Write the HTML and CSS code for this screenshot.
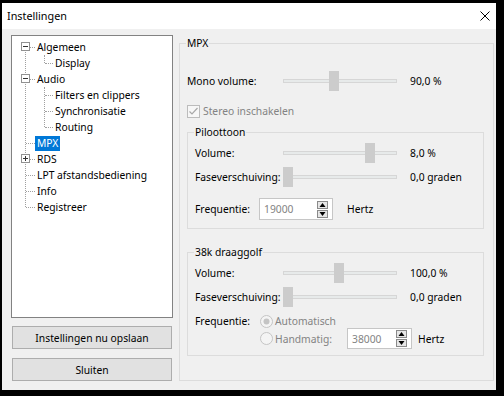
FILE: index.html
```html
<!DOCTYPE html>
<html lang="nl">
<head>
<meta charset="utf-8">
<title>Instellingen</title>
<link rel="stylesheet" href="styles.css">
</head>
<body>
<div class="window">
  <div class="titlebar">
    <span class="title">Instellingen</span>
    <svg class="close" width="10" height="10" viewBox="0 0 10 10"><path d="M0.5 0.5 L9.5 9.5 M9.5 0.5 L0.5 9.5" stroke="#000" stroke-width="1" fill="none"/></svg>
  </div>
  <div class="client">
    <div class="left">
      <div class="tree">
        <ul class="root">
          <li>
            <div class="row"><svg class="exp" width="9" height="9" viewBox="0 0 9 9"><rect x="0.5" y="0.5" width="8" height="8" fill="#fff" stroke="#919191"/><path d="M2 4.5 H7" stroke="#333" stroke-width="1"/></svg><span class="lbl">Algemeen</span></div>
            <ul class="children">
              <li><div class="row"><span class="lbl">Display</span></div></li>
            </ul>
          </li>
          <li>
            <div class="row"><svg class="exp" width="9" height="9" viewBox="0 0 9 9"><rect x="0.5" y="0.5" width="8" height="8" fill="#fff" stroke="#919191"/><path d="M2 4.5 H7" stroke="#333" stroke-width="1"/></svg><span class="lbl">Audio</span></div>
            <ul class="children">
              <li><div class="row"><span class="lbl">Filters en clippers</span></div></li>
              <li><div class="row"><span class="lbl">Synchronisatie</span></div></li>
              <li><div class="row"><span class="lbl">Routing</span></div></li>
            </ul>
          </li>
          <li><div class="row"><span class="lbl selected">MPX</span></div></li>
          <li><div class="row"><svg class="exp" width="9" height="9" viewBox="0 0 9 9"><rect x="0.5" y="0.5" width="8" height="8" fill="#fff" stroke="#919191"/><path d="M2 4.5 H7 M4.5 2 V7" stroke="#333" stroke-width="1"/></svg><span class="lbl">RDS</span></div></li>
          <li><div class="row"><span class="lbl">LPT afstandsbediening</span></div></li>
          <li><div class="row"><span class="lbl">Info</span></div></li>
          <li><div class="row"><span class="lbl">Registreer</span></div></li>
        </ul>
      </div>
      <button class="btn save">Instellingen nu opslaan</button>
      <button class="btn close-btn">Sluiten</button>
    </div>

    <div class="group mpx">
      <span class="legend">MPX</span>
      <div class="srow">
        <span class="slabel wide">Mono volume:</span>
        <div class="slider"><div class="track"></div><div class="thumb" style="left:46px"></div></div>
        <span class="value">90,0 %</span>
      </div>
      <div class="check">
        <svg class="cbox" width="13" height="13" viewBox="0 0 13 13"><rect x="0.5" y="0.5" width="12" height="12" fill="#f7f7f7" stroke="#bcbcbc"/><path d="M2.5 6.5 L5 9 L10.5 3" stroke="#a8a8a8" stroke-width="1.2" fill="none"/></svg>
        <span class="disabled">Stereo inschakelen</span>
      </div>

      <div class="group sub pilot">
        <span class="legend">Piloottoon</span>
        <div class="srow">
          <span class="slabel">Volume:</span>
          <div class="slider"><div class="track"></div><div class="thumb" style="left:82px"></div></div>
          <span class="value">8,0 %</span>
        </div>
        <div class="srow gap">
          <span class="slabel">Faseverschuiving:</span>
          <div class="slider"><div class="track"></div><div class="thumb" style="left:0px"></div></div>
          <span class="value">0,0 graden</span>
        </div>
        <div class="frow">
          <span class="flabel">Frequentie:</span>
          <div class="spin wide-spin">
            <span class="spin-text">19000</span>
            <svg class="arrows" width="11" height="17" viewBox="0 0 11 17"><rect x="0.5" y="0.5" width="10" height="7" fill="#e6e6e6" stroke="#8a8a8a"/><rect x="0.5" y="9.5" width="10" height="7" fill="#e6e6e6" stroke="#8a8a8a"/><path d="M5.5 2 L8.5 6 H2.5 Z" fill="#000"/><path d="M2.5 11 H8.5 L5.5 15 Z" fill="#000"/></svg>
          </div>
          <span class="unit">Hertz</span>
        </div>
      </div>

      <div class="group sub carrier">
        <span class="legend">38k draaggolf</span>
        <div class="srow">
          <span class="slabel">Volume:</span>
          <div class="slider"><div class="track"></div><div class="thumb" style="left:51px"></div></div>
          <span class="value">100,0 %</span>
        </div>
        <div class="srow gap">
          <span class="slabel">Faseverschuiving:</span>
          <div class="slider"><div class="track"></div><div class="thumb" style="left:0px"></div></div>
          <span class="value">0,0 graden</span>
        </div>
        <div class="fblock">
          <span class="flabel2">Frequentie:</span>
          <div class="radios">
            <div class="rrow first">
              <svg class="radio" width="13" height="13" viewBox="0 0 13 13"><circle cx="6.5" cy="6.5" r="6" fill="#f4f4f4" stroke="#c4c4c4"/><circle cx="6.5" cy="6.5" r="3" fill="#c4c4c4"/></svg>
              <span class="disabled">Automatisch</span>
            </div>
            <div class="rrow second">
              <svg class="radio" width="13" height="13" viewBox="0 0 13 13"><circle cx="6.5" cy="6.5" r="6" fill="#f4f4f4" stroke="#c4c4c4"/></svg>
              <span class="disabled rtext">Handmatig:</span>
              <div class="spin small-spin">
                <span class="spin-text">38000</span>
                <svg class="arrows" width="11" height="17" viewBox="0 0 11 17"><rect x="0.5" y="0.5" width="10" height="7" fill="#e6e6e6" stroke="#8a8a8a"/><rect x="0.5" y="9.5" width="10" height="7" fill="#e6e6e6" stroke="#8a8a8a"/><path d="M5.5 2 L8.5 6 H2.5 Z" fill="#000"/><path d="M2.5 11 H8.5 L5.5 15 Z" fill="#000"/></svg>
              </div>
              <span class="unit2">Hertz</span>
            </div>
          </div>
        </div>
      </div>
    </div>
  </div>
</div>
</body>
</html>
```

FILE: styles.css
```css
* { box-sizing: border-box; }
html, body { margin: 0; padding: 0; }
body {
  background: #000;
  width: 504px;
  height: 396px;
  overflow: hidden;
  font-family: "Noto Sans", "Liberation Sans", sans-serif;
  font-size: 10.3px;
  color: #000;
}
.window {
  margin: 3px 0 0 2px;
  width: 494px;
  height: 387px;
  background: #f0f0f0;
  display: flex;
  flex-direction: column;
}
.titlebar {
  height: 26px;
  flex: none;
  background: #fff;
  display: flex;
  align-items: center;
  padding-left: 5px;
  padding-right: 6px;
  font-size: 10.8px;
}
.title { line-height: 26px; }
.close { margin-left: auto; }

.client {
  flex: 1;
  display: flex;
  align-items: flex-start;
  gap: 6px;
  padding: 6px 0 0 9px;
}
.left {
  width: 162px;
  display: flex;
  flex-direction: column;
}
.tree {
  width: 162px;
  height: 283px;
  background: #fff;
  border: 1px solid #828282;
  padding-top: 3px;
}
.tree ul { list-style: none; margin: 0; padding: 0; position: relative; }
.root::before {
  content: "";
  position: absolute;
  left: 13px;
  top: 8px;
  bottom: 8px;
  border-left: 1px dotted #a0a0a0;
}
.children::before {
  content: "";
  position: absolute;
  left: 32px;
  top: 0;
  bottom: 8px;
  border-left: 1px dotted #a0a0a0;
}
.row {
  height: 16px;
  display: flex;
  align-items: center;
  position: relative;
  padding-left: 23px;
}
.row::before {
  content: "";
  position: absolute;
  left: 14px;
  top: 8px;
  width: 9px;
  border-top: 1px dotted #a0a0a0;
}
.children .row { padding-left: 41px; }
.children .row::before { left: 33px; width: 8px; }
.exp {
  position: absolute;
  left: 9px;
  top: 3px;
  z-index: 1;
}
.lbl {
  line-height: 15px;
  height: 15px;
  padding: 0 2px;
  white-space: nowrap;
}
.lbl.selected {
  background: #0078d7;
  color: #fff;
}

.btn {
  font: inherit;
  width: 160px;
  height: 23px;
  margin-left: 1px;
  background: #e1e1e1;
  border: 1px solid #adadad;
  color: #000;
  padding: 0;
}
.save { margin-top: 8px; }
.close-btn { margin-top: 9px; }

.group {
  position: relative;
  border: 1px solid #dcdcdc;
}
.legend {
  position: absolute;
  top: -9px;
  left: 6px;
  line-height: 16px;
  padding: 0 1px;
  background: #f0f0f0;
  white-space: nowrap;
}
.mpx {
  margin-top: 8px;
  width: 315px;
  height: 338px;
  padding: 27px 9px 0 7px;
}
.srow {
  height: 20px;
  display: flex;
  align-items: center;
}
.srow.gap { margin-top: 4px; }
.slabel { width: 88px; flex: none; white-space: nowrap; }
.slabel.wide { width: 96px; }
.slider {
  position: relative;
  flex: none;
  width: 114px;
  height: 20px;
}
.track {
  position: absolute;
  left: 0;
  right: 0;
  top: 8px;
  height: 4px;
  background: #e7eaea;
  border: 1px solid #d6d6d6;
}
.thumb {
  position: absolute;
  top: 0;
  width: 10px;
  height: 20px;
  background: #cccccc;
}
.value { margin-left: 13px; white-space: nowrap; }

.check {
  margin-top: 12px;
  height: 16px;
  display: flex;
  align-items: center;
}
.cbox { margin-right: 3px; }
.disabled { color: #838383; white-space: nowrap; }

.sub {
  width: 297px;
  padding: 10px 0 0 7px;
}
.pilot { margin-top: 13px; height: 97px; }
.carrier { margin-top: 23px; height: 104px; }

.frow {
  margin-top: 11px;
  height: 22px;
  display: flex;
  align-items: center;
}
.flabel { width: 64px; flex: none; }
.spin {
  height: 22px;
  flex: none;
  background: #fff;
  border: 1px solid #c6c6c6;
  display: flex;
  align-items: center;
  padding-left: 4px;
  padding-right: 4px;
}
.wide-spin { width: 74px; }
.small-spin { width: 65px; height: 21px; }
.spin-text { color: #838383; flex: 1; }
.unit { margin-left: 14px; }
.unit2 { margin-left: 6px; }

.fblock {
  margin-top: 7px;
  display: flex;
  align-items: flex-start;
}
.flabel2 { width: 65px; flex: none; line-height: 14px; }
.radios { display: flex; flex-direction: column; }
.rrow { display: flex; align-items: center; }
.rrow.first { height: 14px; }
.rrow.second { height: 21px; }
.radio { margin-right: 2px; flex: none; }
.rtext { width: 72px; }
```
